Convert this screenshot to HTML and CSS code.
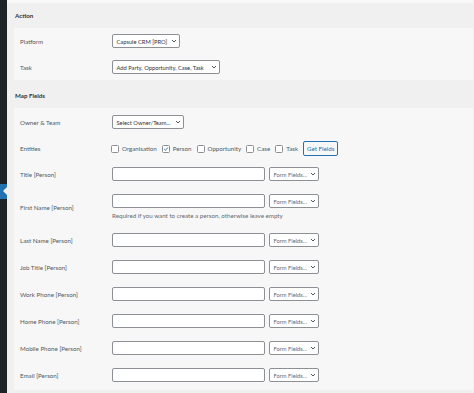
FILE: index.html
```html
<!DOCTYPE html>
<html>
<head>
<meta charset="utf-8">
<title>Capsule CRM</title>
<link rel="stylesheet" href="styles.css">
</head>
<body>
<div class="app">
  <aside class="sidebar"><div class="current"></div></aside>
  <main class="main">
    <div class="topstrip"></div>
    <div class="section-head">Action</div>
    <div class="panel panel-action">
      <div class="row">
        <div class="label">Platform</div>
        <div class="field"><div class="controls">
          <div class="select w-platform"><span>Capsule CRM [PRO]</span><svg class="chev" viewBox="0 0 6 4"><path d="M1 1 L3 3 L5 1"/></svg></div>
        </div></div>
      </div>
      <div class="row">
        <div class="label">Task</div>
        <div class="field"><div class="controls">
          <div class="select w-task"><span>Add Party, Opportunity, Case, Task</span><svg class="chev" viewBox="0 0 6 4"><path d="M1 1 L3 3 L5 1"/></svg></div>
        </div></div>
      </div>
    </div>
    <div class="section-head second">Map Fields</div>
    <div class="panel panel-map">
      <div class="row">
        <div class="label">Owner &amp; Team</div>
        <div class="field"><div class="controls">
          <div class="select w-owner"><span>Select Owner/Team...</span><svg class="chev" viewBox="0 0 6 4"><path d="M1 1 L3 3 L5 1"/></svg></div>
        </div></div>
      </div>
      <div class="row row-entities">
        <div class="label">Entities</div>
        <div class="field"><div class="checks">
          <label class="check"><span class="box"></span>Organisation</label>
          <label class="check"><span class="box checked"><svg viewBox="0 0 8 8"><path d="M1.6 4.2 L3.3 5.8 L6.6 1.8"/></svg></span>Person</label>
          <label class="check"><span class="box"></span>Opportunity</label>
          <label class="check"><span class="box"></span>Case</label>
          <label class="check"><span class="box"></span>Task</label>
          <button class="btn" type="button">Get Fields</button>
        </div></div>
      </div>
      <div class="row">
        <div class="label">Title [Person]</div>
        <div class="field"><div class="controls">
          <input class="input" type="text">
          <div class="select w-ff"><span>Form Fields...</span><svg class="chev" viewBox="0 0 6 4"><path d="M1 1 L3 3 L5 1"/></svg></div>
        </div></div>
      </div>
      <div class="row">
        <div class="label">First Name [Person]</div>
        <div class="field"><div class="controls">
          <input class="input" type="text">
          <div class="select w-ff"><span>Form Fields...</span><svg class="chev" viewBox="0 0 6 4"><path d="M1 1 L3 3 L5 1"/></svg></div>
        </div>
        <div class="help">Required if you want to create a person, otherwise leave empty</div></div>
      </div>
      <div class="row">
        <div class="label">Last Name [Person]</div>
        <div class="field"><div class="controls">
          <input class="input" type="text">
          <div class="select w-ff"><span>Form Fields...</span><svg class="chev" viewBox="0 0 6 4"><path d="M1 1 L3 3 L5 1"/></svg></div>
        </div></div>
      </div>
      <div class="row">
        <div class="label">Job Title [Person]</div>
        <div class="field"><div class="controls">
          <input class="input" type="text">
          <div class="select w-ff"><span>Form Fields...</span><svg class="chev" viewBox="0 0 6 4"><path d="M1 1 L3 3 L5 1"/></svg></div>
        </div></div>
      </div>
      <div class="row">
        <div class="label">Work Phone [Person]</div>
        <div class="field"><div class="controls">
          <input class="input" type="text">
          <div class="select w-ff"><span>Form Fields...</span><svg class="chev" viewBox="0 0 6 4"><path d="M1 1 L3 3 L5 1"/></svg></div>
        </div></div>
      </div>
      <div class="row">
        <div class="label">Home Phone [Person]</div>
        <div class="field"><div class="controls">
          <input class="input" type="text">
          <div class="select w-ff"><span>Form Fields...</span><svg class="chev" viewBox="0 0 6 4"><path d="M1 1 L3 3 L5 1"/></svg></div>
        </div></div>
      </div>
      <div class="row">
        <div class="label">Mobile Phone [Person]</div>
        <div class="field"><div class="controls">
          <input class="input" type="text">
          <div class="select w-ff"><span>Form Fields...</span><svg class="chev" viewBox="0 0 6 4"><path d="M1 1 L3 3 L5 1"/></svg></div>
        </div></div>
      </div>
      <div class="row">
        <div class="label">Email [Person]</div>
        <div class="field"><div class="controls">
          <input class="input" type="text">
          <div class="select w-ff"><span>Form Fields...</span><svg class="chev" viewBox="0 0 6 4"><path d="M1 1 L3 3 L5 1"/></svg></div>
        </div></div>
      </div>
    </div>
  </main>
</div>
</body>
</html>
```
FILE: styles.css
```css
html, body {
  margin: 0;
  padding: 0;
}
body {
  background: #f0f0f1;
  font-family: Lato, "Open Sans", sans-serif;
  font-size: 6.2px;
  color: #50575e;
}
.app {
  display: flex;
  min-height: 393px;
}
.sidebar {
  width: 7px;
  flex: none;
  background: #1d2327;
  position: relative;
}
.current {
  position: absolute;
  left: 0;
  top: 184px;
  width: 7px;
  height: 15px;
  background: #2271b1;
}
.current::after {
  content: "";
  position: absolute;
  right: 0;
  top: 3px;
  width: 0;
  height: 0;
  border-top: 4.5px solid transparent;
  border-bottom: 4.5px solid transparent;
  border-right: 4px solid #f0f0f1;
}
.main {
  flex: 1;
  margin-right: 1px;
  background: #f0f0f1;
}
.topstrip {
  height: 3px;
  background: #f8f8f9;
}
.section-head {
  height: 25px;
  box-sizing: border-box;
  padding: 8px 0 0 8px;
  line-height: 9px;
  font-weight: 700;
  color: #2c3338;
}
.section-head.second {
  height: 28px;
  padding-top: 11px;
}
.panel {
  margin-left: 7px;
  background: #f7f7f7;
  padding-left: 6px;
}
.panel-map {
  padding-top: 1px;
  padding-bottom: 1px;
}
.row {
  display: flex;
  align-items: center;
  padding: 6px 0;
}
.panel-map .row {
  padding: 6px 0 7px;
}
.panel-map .row-entities {
  padding: 5px 0;
}
.label {
  width: 92px;
  flex: none;
  line-height: 9px;
}
.field {
  display: flex;
  flex-direction: column;
}
.controls {
  display: flex;
  align-items: center;
  gap: 4px;
}
.select {
  height: 14px;
  box-sizing: border-box;
  border: 1px solid #8c8f94;
  border-radius: 2px;
  background: #fff;
  display: flex;
  align-items: center;
  justify-content: space-between;
  padding: 0 2px 0 3.5px;
  color: #2c3338;
  font-size: 5.75px;
  white-space: nowrap;
}
.chev {
  width: 6px;
  height: 4px;
  flex: none;
  margin-left: 1.5px;
}
.chev path {
  fill: none;
  stroke: #3c434a;
  stroke-width: 0.9;
}
.w-platform { width: 68px; }
.w-task { width: 108px; }
.w-owner { width: 72px; }
.w-ff { width: 50px; color: #646970; }
.input {
  width: 153px;
  height: 14px;
  box-sizing: border-box;
  margin: 0;
  padding: 0;
  border: 1px solid #8c8f94;
  border-radius: 2px;
  background: #fff;
}
.help {
  margin-top: 3px;
  line-height: 9px;
  color: #646970;
}
.checks {
  display: flex;
  align-items: center;
  margin-left: -1px;
}
.check {
  display: flex;
  align-items: center;
  margin-right: 5px;
  color: #50575e;
}
.box {
  width: 8px;
  height: 8px;
  box-sizing: border-box;
  border: 1px solid #8c8f94;
  border-radius: 1.5px;
  background: #fff;
  margin-right: 3px;
  display: flex;
}
.box svg {
  width: 6px;
  height: 6px;
}
.box svg path {
  fill: none;
  stroke: #2271b1;
  stroke-width: 1.2;
}
.btn {
  height: 15px;
  width: 35px;
  box-sizing: border-box;
  padding: 0;
  border: 1px solid #2271b1;
  border-radius: 2px;
  background: #f6f7f7;
  color: #2271b1;
  font-family: inherit;
  font-size: 6.2px;
  white-space: nowrap;
}
```
